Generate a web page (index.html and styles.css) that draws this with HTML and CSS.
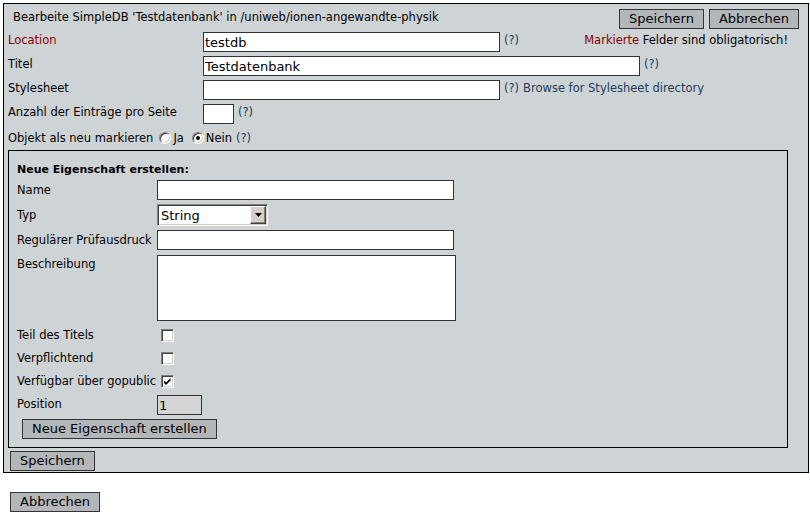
FILE: index.html
```html
<!DOCTYPE html>
<html lang="de">
<head>
<meta charset="utf-8">
<title>SimpleDB bearbeiten</title>
<link rel="stylesheet" href="styles.css">
</head>
<body>
<form class="panel">
  <div class="head">
    <span class="head-title">Bearbeite SimpleDB 'Testdatenbank' in /uniweb/ionen-angewandte-physik</span>
    <div class="head-actions">
      <button type="button" class="btn">Speichern</button>
      <button type="button" class="btn">Abbrechen</button>
    </div>
  </div>

  <div class="props">
    <div class="row">
      <span class="label required">Location</span>
      <div class="field">
        <input class="text w-297" type="text" value="testdb">
        <span class="help">(?)</span>
      </div>
      <span class="note"><span class="required">Markierte</span> Felder sind obligatorisch!</span>
    </div>
    <div class="row">
      <span class="label">Titel</span>
      <div class="field">
        <input class="text w-437" type="text" value="Testdatenbank">
        <span class="help">(?)</span>
      </div>
    </div>
    <div class="row">
      <span class="label">Stylesheet</span>
      <div class="field">
        <input class="text w-297" type="text" value="">
        <span class="help">(?)</span>
        <span class="help">Browse for Stylesheet directory</span>
      </div>
    </div>
    <div class="row">
      <span class="label">Anzahl der Einträge pro Seite</span>
      <div class="field">
        <input class="text w-31" type="text" value="">
        <span class="help">(?)</span>
      </div>
    </div>
    <div class="row row-radio">
      <span class="inline-label">Objekt als neu markieren</span>
      <span class="radio radio-ja"></span><span class="opt opt-ja">Ja</span>
      <span class="radio radio-nein"><span class="dot"></span></span><span class="opt opt-nein">Nein</span>
      <span class="help help-radio">(?)</span>
    </div>
  </div>

  <div class="newprop">
    <div class="newprop-title">Neue Eigenschaft erstellen:</div>
    <div class="irow">
      <span class="ilabel">Name</span>
      <input class="text w-297" type="text" value="">
    </div>
    <div class="irow irow-select">
      <span class="ilabel">Typ</span>
      <span class="select">
        <select class="select-box"><option>String</option></select>
        <span class="select-arrow"><svg width="7" height="4" viewBox="0 0 7 4"><polygon points="0,0 7,0 3.5,4" fill="#000"/></svg></span>
      </span>
    </div>
    <div class="irow">
      <span class="ilabel">Regulärer Prüfausdruck</span>
      <input class="text w-297" type="text" value="">
    </div>
    <div class="irow irow-area">
      <span class="ilabel">Beschreibung</span>
      <textarea class="area"></textarea>
    </div>
    <div class="irow irow-check">
      <span class="ilabel">Teil des Titels</span>
      <span class="check"></span>
    </div>
    <div class="irow irow-check">
      <span class="ilabel">Verpflichtend</span>
      <span class="check"></span>
    </div>
    <div class="irow irow-check">
      <span class="ilabel">Verfügbar über gopublic</span>
      <span class="check"><svg width="9" height="9" viewBox="0 0 9 9"><polygon points="1,3.5 3,5.5 7.5,1 7.5,3.5 3,8 1,6" fill="#000"/></svg></span>
    </div>
    <div class="irow irow-pos">
      <span class="ilabel">Position</span>
      <input class="text text-pos" type="text" value="1" readonly>
    </div>
    <div class="irow-action">
      <button type="button" class="btn">Neue Eigenschaft erstellen</button>
    </div>
  </div>

  <button type="button" class="btn btn-save">Speichern</button>
</form>
<button type="button" class="btn btn-cancel">Abbrechen</button>
</body>
</html>
```

FILE: styles.css
```css
* {
  box-sizing: border-box;
}

html,
body {
  margin: 0;
  padding: 0;
  background: #fff;
}

body {
  padding: 3px;
  font-family: "DejaVu Sans", "Bitstream Vera Sans", sans-serif;
  font-size: 11.5px;
  line-height: 16px;
  color: #000;
}

.panel {
  width: 806px;
  margin: 0;
  border: 1px solid #000;
  background: #ced3d6;
  padding: 0 0 1px 4px;
}

.head {
  display: flex;
  justify-content: space-between;
  align-items: flex-start;
  padding: 5px 9px 1px 5px;
}

.head-title {
  line-height: 16px;
}

.head-actions {
  display: flex;
  gap: 5px;
}

.btn {
  display: inline-block;
  height: 20px;
  margin: 0;
  padding: 0 9px;
  border: 1px solid #333;
  border-radius: 0;
  background: #b3b7ba;
  font-family: "DejaVu Sans", sans-serif;
  font-size: 13px;
  line-height: 18px;
  color: #000;
}

.props {
  width: 780px;
}

.row {
  display: flex;
  align-items: flex-start;
  height: 24px;
}

.label {
  flex: none;
  width: 195px;
  padding-top: 2px;
}

.required {
  color: #8b0000;
}

.field {
  display: flex;
  align-items: flex-start;
  gap: 4px;
  padding-top: 2px;
}

.help {
  color: #1d3e5f;
}

.note {
  margin-left: auto;
  padding-top: 2px;
}

.text {
  height: 20px;
  margin: 0;
  padding: 0 1px;
  border: 1px solid #333;
  border-radius: 0;
  background: #fff;
  font-family: "DejaVu Sans", sans-serif;
  font-size: 13px;
  color: #000;
  outline: none;
}

.w-297 {
  width: 297px;
}

.w-437 {
  width: 437px;
}

.w-31 {
  width: 31px;
}

.row-radio .inline-label,
.row-radio .opt,
.row-radio .help {
  padding-top: 4px;
}

.radio {
  flex: none;
  display: flex;
  align-items: center;
  justify-content: center;
  width: 12px;
  height: 12px;
  margin-top: 6px;
  border: 1px solid;
  border-color: #808080 #fff #fff #808080;
  border-radius: 50%;
  background: #fff;
  box-shadow: inset 1px 1px #404040, inset -1px -1px #d4d0c8;
}

.radio .dot {
  width: 4px;
  height: 4px;
  border-radius: 50%;
  background: #000;
}

.radio-ja {
  margin-left: 6px;
}

.opt-ja {
  margin-left: 2px;
}

.radio-nein {
  margin-left: 8px;
}

.opt-nein {
  margin-left: 2px;
}

.help-radio {
  margin-left: 4px;
}

.newprop {
  width: 780px;
  border: 1px solid #000;
  padding: 11px 8px 8px 8px;
}

.newprop-title {
  font-weight: bold;
  font-size: 11px;
}

.irow {
  display: flex;
  align-items: center;
  height: 24px;
}

.ilabel {
  flex: none;
  width: 140px;
}

.irow-select {
  height: 26px;
}

.select {
  position: relative;
  display: inline-block;
  width: 111px;
  height: 22px;
}

.select-box {
  appearance: none;
  -webkit-appearance: none;
  display: block;
  width: 100%;
  height: 100%;
  margin: 0;
  padding: 0 0 0 3px;
  border: 1px solid;
  border-color: #808080 #fff #fff #808080;
  border-radius: 0;
  background: #fff;
  box-shadow: inset 1px 1px #404040, inset -1px -1px #d4d0c8;
  font-family: "DejaVu Sans", sans-serif;
  font-size: 13px;
  color: #000;
  outline: none;
}

.select-arrow {
  position: absolute;
  top: 2px;
  right: 2px;
  display: flex;
  align-items: center;
  justify-content: center;
  width: 16px;
  height: 18px;
  border: 1px solid;
  border-color: #fff #404040 #404040 #fff;
  background: #d4d0c8;
  box-shadow: inset -1px -1px #808080;
  pointer-events: none;
}

.irow-area {
  height: auto;
  align-items: flex-start;
  padding-top: 3px;
}

.irow-area .ilabel {
  padding-top: 1px;
}

.area {
  display: block;
  width: 299px;
  height: 66px;
  margin: 0;
  padding: 1px;
  border: 1px solid #333;
  border-radius: 0;
  background: #fff;
  resize: none;
  font-family: "DejaVu Sans", sans-serif;
  font-size: 13px;
  outline: none;
}

.irow-check {
  height: 23px;
  align-items: flex-start;
}

.irow-area + .irow-check {
  margin-top: 4px;
}

.irow-check .ilabel {
  padding-top: 2px;
}

.check {
  flex: none;
  display: flex;
  align-items: center;
  justify-content: center;
  width: 13px;
  height: 13px;
  margin: 4px 0 0 4px;
  border: 1px solid;
  border-color: #808080 #fff #fff #808080;
  background: #fff;
  box-shadow: inset 1px 1px #404040, inset -1px -1px #d4d0c8;
}

.irow-pos {
  height: 22px;
  align-items: flex-start;
}

.irow-pos .ilabel {
  padding-top: 2px;
}

.text-pos {
  width: 45px;
  margin-top: 1px;
  background: #d4d4d4;
}

.irow-action {
  padding: 3px 0 0 5px;
}

.btn-save {
  display: block;
  margin: 3px 0 0 2px;
}

.btn-cancel {
  display: block;
  margin: 19px 0 0 7px;
}
```
